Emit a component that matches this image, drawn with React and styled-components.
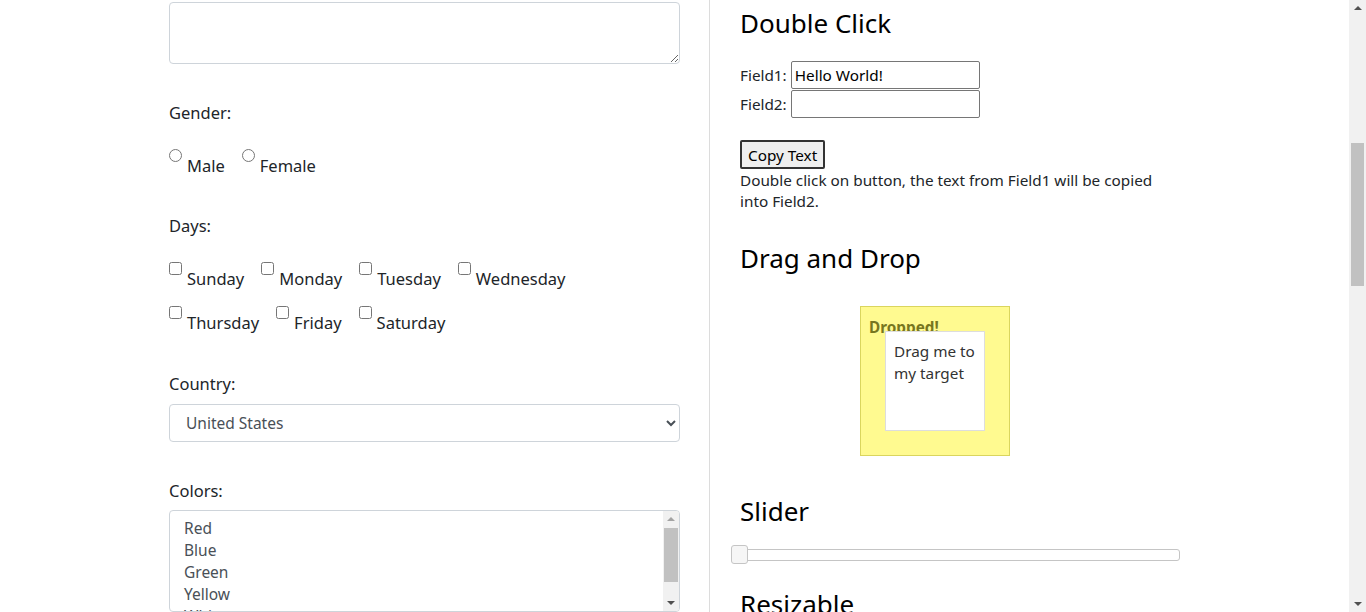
import React from "react";
import styled, { createGlobalStyle } from "styled-components";

const Global = createGlobalStyle`
  html, body { margin: 0; padding: 0; background: #fff; }
  body { font-family: "Segoe UI", "Noto Sans", "Open Sans", sans-serif; color: #212529; }
  * { box-sizing: border-box; }
`;

const Page = styled.div`
  display: flex;
  width: 1366px;
  height: 612px;
  overflow: hidden;
  background: #fff;
`;

const Main = styled.div`
  flex: 1;
  display: flex;
  padding-left: 169px;
  overflow: hidden;
`;

const LeftCol = styled.div`
  width: 511px;
  flex: none;
  padding-top: 2px;
  font-size: 16.5px;
`;

const Divider = styled.div`
  width: 1px;
  flex: none;
  margin: 0 30px 0 29px;
  background: #dcdcdc;
`;

const RightCol = styled.div`
  width: 440px;
  flex: none;
  font-size: 15.3px;
  color: #212529;
`;

const TextArea = styled.textarea`
  display: block;
  width: 511px;
  height: 62px;
  border: 1px solid #ced4da;
  border-radius: 4px;
  resize: vertical;
  font: inherit;
`;

const FieldLabel = styled.div`
  line-height: 24px;
  margin-top: ${(p) => p.$mt}px;
`;

const OptionRow = styled.div`
  display: flex;
  gap: 17px;
  margin-top: ${(p) => p.$mt}px;
`;

const Choice = styled.label`
  display: inline-flex;
  align-items: flex-start;
  gap: 5px;
  line-height: 24px;
  input {
    margin: 0;
    width: 13px;
    height: 13px;
    flex: none;
  }
  span {
    margin-top: 5px;
  }
`;

const Select = styled.select`
  display: block;
  width: 511px;
  height: 38px;
  margin-top: 8px;
  padding: 0 12px;
  font-family: inherit;
  font-size: 15.5px;
  color: #495057;
  background: #fff;
  border: 1px solid #ced4da;
  border-radius: 4px;
`;

const ListBox = styled.div`
  display: flex;
  width: 511px;
  height: 102px;
  margin-top: 7px;
  border: 1px solid #ced4da;
  border-radius: 4px;
  overflow: hidden;
`;

const ListItems = styled.div`
  flex: 1;
  padding: 6px 0 0 14px;
  font-size: 15.5px;
  color: #495057;
`;

const ListItem = styled.div`
  line-height: 22px;
`;

const ScrollBar = styled.div`
  width: ${(p) => p.$w}px;
  flex: none;
  display: flex;
  flex-direction: column;
  align-items: center;
  background: #f1f1f1;
`;

const Arrow = styled.div`
  width: 0;
  height: 0;
  margin: ${(p) => (p.$up ? "6px 0 0" : "0 0 6px")};
  border-left: 4px solid transparent;
  border-right: 4px solid transparent;
  ${(p) => (p.$up ? "border-bottom" : "border-top")}: 4px solid ${(p) => p.$c};
`;

const Track = styled.div`
  flex: 1;
  width: 100%;
  display: flex;
  justify-content: center;
`;

const Thumb = styled.div`
  width: ${(p) => p.$w}px;
  height: ${(p) => p.$h}px;
  margin-top: ${(p) => p.$top}px;
  background: ${(p) => p.$c};
`;

const H2 = styled.h2`
  margin: ${(p) => p.$mt}px 0 0;
  font-size: 26px;
  font-weight: 400;
  line-height: 32px;
  color: #000;
`;

const FieldRow = styled.div`
  display: flex;
  align-items: center;
  height: 29px;
  margin-top: ${(p) => p.$mt || 0}px;
  label {
    margin-right: 4px;
  }
`;

const TextInput = styled.input`
  width: 189px;
  height: 28px;
  padding: 1px 3px;
  border: 1px solid #767676;
  border-radius: 2px;
  font-family: inherit;
  font-size: 15.3px;
  color: #000;
`;

const Button = styled.button`
  display: block;
  margin-top: 22px;
  height: 29px;
  padding: 0 6px;
  background: #efefef;
  border: 2px solid #333;
  border-radius: 2px;
  font-family: inherit;
  font-size: 15.3px;
  color: #000;
`;

const Desc = styled.p`
  margin: 1px 0 0;
  line-height: 21px;
`;

const DropZone = styled.div`
  position: relative;
  width: 150px;
  height: 150px;
  margin: 32px 0 0 120px;
  padding: 10px 0 0 8px;
  background: #fffa90;
  border: 1px solid #dad55e;
  color: #777620;
  font-weight: 700;
`;

const Draggable = styled.div`
  position: absolute;
  left: 24px;
  top: 24px;
  width: 100px;
  height: 100px;
  padding: 8px 8px;
  background: #fff;
  border: 1px solid #dddddd;
  color: #333;
  font-weight: 400;
  line-height: 22px;
`;

const SliderTrack = styled.div`
  position: relative;
  width: 440px;
  height: 12px;
  margin-top: 22px;
  border: 1px solid #c5c5c5;
  border-radius: 3px;
  background: #fff;
`;

const SliderHandle = styled.span`
  position: absolute;
  left: -10px;
  top: -5px;
  width: 17px;
  height: 19px;
  background: #f6f6f6;
  border: 1px solid #c5c5c5;
  border-radius: 3px;
`;

const days1 = ["Sunday", "Monday", "Tuesday", "Wednesday"];
const days2 = ["Thursday", "Friday", "Saturday"];
const colors = ["Red", "Blue", "Green", "Yellow", "White", "Black", "Orange"];

export default function App() {
  return (
    <>
      <Global />
      <Page>
        <Main>
          <LeftCol>
            <TextArea />
            <FieldLabel $mt={37}>Gender:</FieldLabel>
            <OptionRow $mt={24}>
              <Choice>
                <input type="radio" name="gender" />
                <span>Male</span>
              </Choice>
              <Choice>
                <input type="radio" name="gender" />
                <span>Female</span>
              </Choice>
            </OptionRow>
            <FieldLabel $mt={36}>Days:</FieldLabel>
            <OptionRow $mt={24}>
              {days1.map((d) => (
                <Choice key={d}>
                  <input type="checkbox" />
                  <span>{d}</span>
                </Choice>
              ))}
            </OptionRow>
            <OptionRow $mt={15}>
              {days2.map((d) => (
                <Choice key={d}>
                  <input type="checkbox" />
                  <span>{d}</span>
                </Choice>
              ))}
            </OptionRow>
            <FieldLabel $mt={37}>Country:</FieldLabel>
            <Select defaultValue="United States">
              <option>United States</option>
              <option>Canada</option>
              <option>United Kingdom</option>
            </Select>
            <FieldLabel $mt={37}>Colors:</FieldLabel>
            <ListBox role="listbox">
              <ListItems>
                {colors.map((c) => (
                  <ListItem key={c} role="option">{c}</ListItem>
                ))}
              </ListItems>
              <ScrollBar $w={16}>
                <Arrow $up $c="#a3a3a3" />
                <Track>
                  <Thumb $w={14} $h={54} $top={7} $c="#c1c1c1" />
                </Track>
                <Arrow $c="#505050" />
              </ScrollBar>
            </ListBox>
          </LeftCol>
          <Divider />
          <RightCol>
            <H2 $mt={7}>Double Click</H2>
            <FieldRow $mt={21}>
              <label>Field1:</label>
              <TextInput defaultValue="Hello World!" />
            </FieldRow>
            <FieldRow>
              <label>Field2:</label>
              <TextInput />
            </FieldRow>
            <Button>Copy Text</Button>
            <Desc>Double click on button, the text from Field1 will be copied into Field2.</Desc>
            <H2 $mt={30}>Drag and Drop</H2>
            <DropZone>
              Dropped!
              <Draggable>Drag me to my target</Draggable>
            </DropZone>
            <H2 $mt={39}>Slider</H2>
            <SliderTrack>
              <SliderHandle />
            </SliderTrack>
            <H2 $mt={27}>Resizable</H2>
          </RightCol>
        </Main>
        <ScrollBar $w={17}>
          <Arrow $up $c="#505050" />
          <Track>
            <Thumb $w={13} $h={143} $top={133} $c="#c1c1c1" />
          </Track>
          <Arrow $c="#505050" />
        </ScrollBar>
      </Page>
    </>
  );
}
